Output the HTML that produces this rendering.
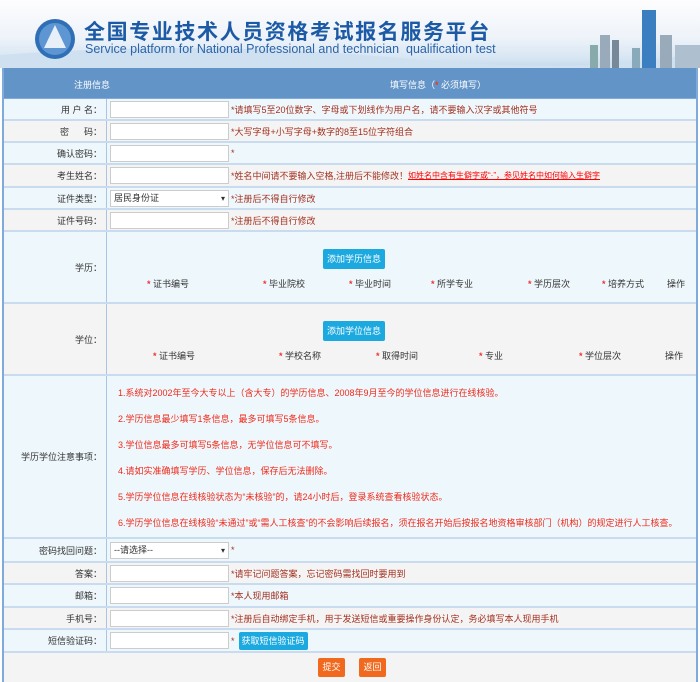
<!DOCTYPE html><html><head><meta charset="utf-8"><style>
*{margin:0;padding:0;box-sizing:border-box}
body{width:700px;height:682px;overflow:hidden;background:#fff;font-family:"Liberation Sans","Noto Sans CJK SC",sans-serif;font-size:9px;color:#333;position:relative}
.ban{position:absolute;left:0;top:0;width:700px;height:68px;background:linear-gradient(180deg,#fdfdfe 0%,#eef3f9 55%,#d8e6f3 85%,#c5d8ec 100%)}
.wrap{position:absolute;left:2px;top:68px;width:696px;height:614px;background:#7fabdc}
.r{position:absolute;left:2px;width:692px;border-bottom:2px solid #c9dcef}
.a{background:#eef7fc}.b{background:#f4f4f4}
.l{position:absolute;left:0;top:0;width:103px;height:100%;border-right:1px solid #a9c5e4;text-align:right;padding-right:4px;display:flex;align-items:center;justify-content:flex-end;color:#333}
.c{position:absolute;left:106px;top:0;right:0;height:100%;display:flex;align-items:center;color:#a3301f}
.in{width:119px;height:17px;border:1px solid #ccc;background:#fff;margin-right:2px;flex:none}
.sel{width:119px;height:17px;border:1px solid #ccc;background:#fff;margin-right:2px;flex:none;color:#333;padding-left:3px;line-height:15px;position:relative}
.sel:after{content:"▾";position:absolute;right:3px;top:0;font-size:8px}
.btn{background:#1ba9e0;color:#fff;border-radius:2px;text-align:center;position:absolute}
.s{color:#e33}
.hd{position:absolute;left:2px;top:0;width:692px;height:30px;background:#6394c8;color:#fff}
.cols{position:absolute;top:45px;left:0;width:100%}
.cols span{position:absolute;color:#333}
.n{color:#f02a1a;position:absolute;left:114px}
</style></head><body>
<div class="ban">
<svg width="700" height="68" style="position:absolute;left:0;top:0">
<path d="M0 55 Q200 40 400 58 T700 52 L700 68 L0 68Z" fill="#cfe0f1"/>
<circle cx="55" cy="39" r="20" fill="#2f6fb5"/><circle cx="55" cy="39" r="16" fill="#5d96d2"/>
<path d="M44 48 L55 25 L66 48 Z" fill="#fff" opacity=".85"/>
<rect x="590" y="45" width="8" height="23" fill="#8aa"/><rect x="600" y="35" width="10" height="33" fill="#99aabb"/><rect x="612" y="40" width="7" height="28" fill="#778899"/>
<rect x="632" y="48" width="8" height="20" fill="#8ab"/><rect x="642" y="10" width="14" height="58" fill="#3c7fc0"/><rect x="660" y="35" width="12" height="33" fill="#9ab"/><rect x="675" y="45" width="25" height="23" fill="#aebfd0"/>
</svg>
<div style="position:absolute;left:84px;top:16px;font-size:21px;font-weight:bold;color:#1d5aa6;letter-spacing:1.6px;font-family:'Noto Sans CJK SC',sans-serif;white-space:nowrap">全国专业技术人员资格考试报名服务平台</div>
<div style="position:absolute;left:85px;top:42px;font-size:12.5px;color:#2a64a8;white-space:nowrap">Service platform for National Professional and technician &nbsp;qualification test</div>
</div>
<div class="wrap">
<div class="hd"><span style="position:absolute;left:70px;top:10px">注册信息</span><span style="position:absolute;left:386px;top:10px">填写信息（<b style="color:#e33">*</b> 必须填写）</span></div>
<div class="r a" style="top:31px;height:22px"><div class="l">用 户 名：</div><div class="c"><div class="in"></div>*请填写5至20位数字、字母或下划线作为用户名，请不要输入汉字或其他符号</div></div>
<div class="r b" style="top:53px;height:22px"><div class="l">密&nbsp;&nbsp;&nbsp;&nbsp;&nbsp;&nbsp;码：</div><div class="c"><div class="in"></div>*大写字母+小写字母+数字的8至15位字符组合</div></div>
<div class="r a" style="top:75px;height:22px"><div class="l">确认密码：</div><div class="c"><div class="in"></div>*</div></div>
<div class="r b" style="top:97px;height:23px"><div class="l">考生姓名：</div><div class="c"><div class="in"></div>*姓名中间请不要输入空格,注册后不能修改！<u style="color:#f00;font-size:8px">如姓名中含有生僻字或“·”，参见姓名中如何输入生僻字</u></div></div>
<div class="r a" style="top:120px;height:22px"><div class="l">证件类型：</div><div class="c"><div class="sel">居民身份证</div>*注册后不得自行修改</div></div>
<div class="r b" style="top:142px;height:22px"><div class="l">证件号码：</div><div class="c"><div class="in"></div>*注册后不得自行修改</div></div>
<div class="r a" style="top:164px;height:72px"><div class="l">学历：</div>
<div class="btn" style="left:319px;top:17px;width:62px;height:20px;line-height:20px">添加学历信息</div>
<div class="cols"><span style="left:143px"><b class="s">*</b> 证书编号</span><span style="left:259px"><b class="s">*</b> 毕业院校</span><span style="left:345px"><b class="s">*</b> 毕业时间</span><span style="left:427px"><b class="s">*</b> 所学专业</span><span style="left:524px"><b class="s">*</b> 学历层次</span><span style="left:598px"><b class="s">*</b> 培养方式</span><span style="left:663px">操作</span></div></div>
<div class="r b" style="top:236px;height:72px"><div class="l">学位：</div>
<div class="btn" style="left:319px;top:17px;width:62px;height:20px;line-height:20px">添加学位信息</div>
<div class="cols"><span style="left:149px"><b class="s">*</b> 证书编号</span><span style="left:275px"><b class="s">*</b> 学校名称</span><span style="left:372px"><b class="s">*</b> 取得时间</span><span style="left:475px"><b class="s">*</b> 专业</span><span style="left:575px"><b class="s">*</b> 学位层次</span><span style="left:661px">操作</span></div></div>
<div class="r a" style="top:308px;height:163px"><div class="l">学历学位注意事项：</div>
<div class="n" style="top:10px">1.系统对2002年至今大专以上（含大专）的学历信息、2008年9月至今的学位信息进行在线核验。</div>
<div class="n" style="top:36px">2.学历信息最少填写1条信息，最多可填写5条信息。</div>
<div class="n" style="top:62px">3.学位信息最多可填写5条信息，无学位信息可不填写。</div>
<div class="n" style="top:88px">4.请如实准确填写学历、学位信息，保存后无法删除。</div>
<div class="n" style="top:114px">5.学历学位信息在线核验状态为“未核验”的，请24小时后，登录系统查看核验状态。</div>
<div class="n" style="top:140px">6.学历学位信息在线核验“未通过”或“需人工核查”的不会影响后续报名，须在报名开始后按报名地资格审核部门（机构）的规定进行人工核查。</div></div>
<div class="r b" style="top:471px;height:24px;background:#eef7fc"><div class="l">密码找回问题：</div><div class="c"><div class="sel">--请选择--</div>*</div></div>
<div class="r b" style="top:495px;height:22px"><div class="l">答案：</div><div class="c"><div class="in"></div>*请牢记问题答案，忘记密码需找回时要用到</div></div>
<div class="r a" style="top:517px;height:23px"><div class="l">邮箱：</div><div class="c"><div class="in"></div>*本人现用邮箱</div></div>
<div class="r b" style="top:540px;height:22px"><div class="l">手机号：</div><div class="c"><div class="in"></div>*注册后自动绑定手机，用于发送短信或重要操作身份认定，务必填写本人现用手机</div></div>
<div class="r a" style="top:562px;height:23px"><div class="l">短信验证码：</div><div class="c"><div class="in"></div>*<div style="margin-left:4px;background:#1ba9e0;color:#fff;border-radius:2px;width:69px;height:18px;line-height:18px;text-align:center">获取短信验证码</div></div></div>
<div class="r b" style="top:585px;height:29px;border:none">
<div style="position:absolute;left:314px;top:5px;width:27px;height:19px;line-height:19px;background:#f0691e;color:#fff;text-align:center;border-radius:2px">提交</div>
<div style="position:absolute;left:355px;top:5px;width:27px;height:19px;line-height:19px;background:#f0691e;color:#fff;text-align:center;border-radius:2px">返回</div></div>
</div>
</body></html>
